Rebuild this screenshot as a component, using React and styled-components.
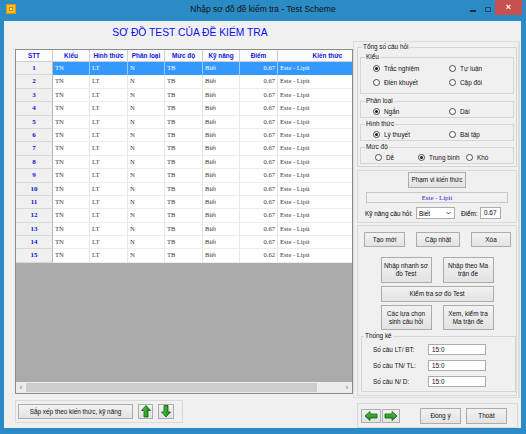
import styled, { createGlobalStyle } from "styled-components";

const GlobalStyle = createGlobalStyle`
  html, body { margin: 0; padding: 0; }
  body {
    width: 526px;
    height: 434px;
    overflow: hidden;
    font-family: "Liberation Sans", Arial, sans-serif;
  }
  * { box-sizing: border-box; }
`;

const COLS = "37px 37px 38px 37px 38px 37px 38px 100px";

const Window = styled.div`
  width: 526px;
  height: 434px;
  background: #2b8cc5;
  display: flex;
  flex-direction: column;
`;

const TitleBar = styled.div`
  height: 22px;
  display: grid;
  grid-template-columns: 1fr auto 1fr;
  align-items: start;
`;

const AppIcon = styled.div`
  margin: 4px 0 0 6px;
  width: 10px;
  height: 10px;
  background: #f5c022;
  border: 1px solid #d99a10;
  display: flex;
  align-items: center;
  justify-content: center;
`;

const Title = styled.div`
  font-size: 8.5px;
  line-height: 19px;
  color: #111;
`;

const Controls = styled.div`
  display: flex;
  justify-content: flex-end;
  align-items: flex-start;
  padding-right: 4px;
`;

const MinBtn = styled.div`
  width: 6px;
  height: 2px;
  background: #1a2a3a;
  margin: 10px 9px 0 0;
`;

const MaxBtn = styled.div`
  width: 6px;
  height: 5px;
  border: 1px solid #1a4a6a;
  margin: 7px 4px 0 0;
`;

const CloseBtn = styled.div`
  width: 27px;
  height: 15px;
  background: #c7504f;
  color: #fff;
  font-size: 9px;
  font-weight: bold;
  line-height: 15px;
  text-align: center;
`;

const Client = styled.div`
  flex: 1;
  margin: 0 5px 6px 4px;
  background: #f0f0f0;
  display: flex;
`;

const LeftCol = styled.div`
  width: 349px;
  padding-left: 11px;
  display: flex;
  flex-direction: column;
`;

const Heading = styled.div`
  height: 28px;
  line-height: 24px;
  padding-left: 12px;
  text-align: center;
  font-size: 10.3px;
  color: #0c0cf0;
`;

const GridBox = styled.div`
  width: 338px;
  height: 345px;
  border: 1px solid #8c8c8c;
  background: #ababab;
  display: flex;
  flex-direction: column;
  overflow: hidden;
`;

const Rows = styled.div`
  flex: 1;
  overflow: hidden;
`;

const Row = styled.div`
  display: grid;
  grid-template-columns: ${COLS};
  height: ${(p) => (p.$head ? "12px" : "13.4px")};
`;

const HeadCell = styled.div`
  background: #fbfbfb;
  border-right: 1px solid #cfcfcf;
  border-bottom: 1px solid #cfcfcf;
  font-size: 6.4px;
  font-weight: bold;
  color: #1515d8;
  text-align: center;
  line-height: 11px;
  white-space: nowrap;
  overflow: hidden;
`;

const RowHead = styled.div`
  background: #f0f0f0;
  border-right: 1px solid #b8b8b8;
  border-bottom: 1px solid #d8d8d8;
  font-family: "Liberation Serif", "Times New Roman", serif;
  font-size: 7px;
  font-weight: bold;
  color: #1010d0;
  text-align: center;
  line-height: 12.4px;
`;

const Cell = styled.div`
  background: ${(p) => (p.$sel ? "#3399ff" : "#fff")};
  color: ${(p) => (p.$sel ? "#fff" : "#3a3a3a")};
  border-right: 1px solid ${(p) => (p.$sel ? "#9cc9ff" : "#e6e6e6")};
  border-bottom: 1px solid ${(p) => (p.$sel ? "#3399ff" : "#ededed")};
  font-family: "Liberation Serif", "Times New Roman", serif;
  font-size: 6.6px;
  line-height: 12.4px;
  padding: 0 2px;
  text-align: ${(p) => (p.$right ? "right" : "left")};
  white-space: nowrap;
  overflow: hidden;
`;

const HScroll = styled.div`
  height: 11px;
  background: #ececec;
  display: flex;
  align-items: center;
  font-size: 7px;
  color: #555;
`;

const ScrollArrow = styled.div`
  width: 10px;
  text-align: center;
  line-height: 11px;
`;

const ScrollTrack = styled.div`
  flex: 1;
  height: 9px;
  padding-right: 25px;
`;

const ScrollThumb = styled.div`
  height: 100%;
  background: #cdcdcd;
`;

const Panel = styled.div`
  border: 1px solid #dadada;
  display: flex;
  flex-direction: ${(p) => (p.$column ? "column" : "row")};
  align-items: ${(p) => (p.$column ? "stretch" : "center")};
  height: ${(p) => p.$h}px;
`;

const LeftFooter = styled(Panel)`
  margin-top: 6px;
  width: 168px;
  padding-left: 2px;
  gap: 5px;
`;

const Button = styled.button`
  font-family: "Liberation Sans", Arial, sans-serif;
  font-size: 6.4px;
  line-height: 8px;
  color: #111;
  background: linear-gradient(#f2f2f2, #e3e3e3);
  border: 1px solid #acacac;
  border-radius: 0;
  padding: 0 2px;
  width: ${(p) => p.$w}px;
  height: ${(p) => p.$h || 15}px;
  display: flex;
  align-items: center;
  justify-content: center;
  text-align: center;
  flex-shrink: 0;
`;

const RightCol = styled.div`
  width: 167px;
  padding-top: 20px;
  display: flex;
  flex-direction: column;
`;

const RightFrame = styled.div`
  border: 1px solid #dcdcdc;
  border-right-width: 2px;
  padding: 1px 1px 1px 3px;
  display: flex;
  flex-direction: column;
`;

const Group = styled.fieldset`
  margin: ${(p) => p.$m || "0"};
  min-width: 0;
  border: 1px solid #d5d5d5;
  padding: ${(p) => p.$pad || "0 2px 2px"};
  font-size: 6.4px;
  color: #111;
`;

const Legend = styled.legend`
  padding: 0 1px;
  margin-left: 2px;
  line-height: 8px;
  font-size: 6.4px;
`;

const RadioGrid = styled.div`
  display: grid;
  grid-template-columns: ${(p) => p.$cols};
  grid-auto-rows: ${(p) => p.$rowH}px;
  padding-left: ${(p) => p.$pl || 10}px;
  padding-bottom: ${(p) => p.$pb || 0}px;
  align-items: center;
`;

const RadioItem = styled.label`
  display: flex;
  align-items: center;
  gap: 4px;
  font-size: 6.4px;
  white-space: nowrap;
`;

const Circle = styled.span`
  width: 7px;
  height: 7px;
  border-radius: 50%;
  border: 1px solid #4a4a4a;
  background: #fff;
  display: flex;
  align-items: center;
  justify-content: center;
  &::after {
    content: "";
    width: 3px;
    height: 3px;
    border-radius: 50%;
    background: ${(p) => (p.$on ? "#1a1a1a" : "transparent")};
  }
`;

const ScopeBox = styled.div`
  margin: 4px 8px 0;
  height: 11px;
  border: 1px solid #c8c8c8;
  background: #f0f0f0;
  text-align: center;
  font-family: "Liberation Serif", "Times New Roman", serif;
  font-size: 6.8px;
  line-height: 9px;
  color: #2020e0;
`;

const SkillRow = styled.div`
  margin-top: 4px;
  height: 12px;
  padding-left: 7px;
  display: grid;
  grid-template-columns: 51px 45px 19px 21px;
  column-gap: 0;
  align-items: center;
  font-size: 6.4px;
`;

const Combo = styled.div`
  height: 12px;
  background: #fff;
  border: 1px solid #acacac;
  display: flex;
  align-items: center;
  justify-content: space-between;
  padding: 0 3px 0 2px;
  font-size: 6.4px;
  margin-right: 6px;
`;

const TextBox = styled.div`
  width: ${(p) => p.$w}px;
  height: ${(p) => p.$h || 12}px;
  background: #fff;
  border: 1px solid #acacac;
  font-size: 6.4px;
  line-height: ${(p) => (p.$h || 12) - 2}px;
  padding-left: 3px;
`;

const BtnRow = styled.div`
  display: flex;
  justify-content: ${(p) => p.$justify || "center"};
  gap: ${(p) => p.$gap || 0}px;
  margin-top: ${(p) => p.$mt || 0}px;
  padding: ${(p) => p.$pad || "0"};
`;

const StatRow = styled.div`
  height: 16px;
  display: grid;
  grid-template-columns: 55px 58px;
  align-items: center;
  padding-left: 11px;
  font-size: 6.4px;
`;

const RightFooter = styled(Panel)`
  margin: 5px 2px 0 4px;
  padding-left: 3px;
`;

const ArrowBtn = styled(Button)`
  padding: 0;
  margin-left: ${(p) => p.$ml || 0}px;
`;

const Arrow = ({ dir }) => {
  const paths = {
    left: "M1 5 L6 0.5 L6 3 L13 3 L13 7 L6 7 L6 9.5 Z",
    right: "M13 5 L8 0.5 L8 3 L1 3 L1 7 L8 7 L8 9.5 Z",
    up: "M5 0.5 L9.5 5.5 L7 5.5 L7 12 L3 12 L3 5.5 L0.5 5.5 Z",
    down: "M5 12 L9.5 7 L7 7 L7 0.5 L3 0.5 L3 7 L0.5 7 Z",
  };
  const vertical = dir === "up" || dir === "down";
  return (
    <svg width={vertical ? 10 : 14} height={vertical ? 13 : 10} viewBox={vertical ? "0 0 10 13" : "0 0 14 10"}>
      <defs>
        <linearGradient id={`g-${dir}`} x1="0" y1="0" x2={vertical ? "1" : "0"} y2={vertical ? "0" : "1"}>
          <stop offset="0" stopColor="#5fcf4f" />
          <stop offset="1" stopColor="#0f7f12" />
        </linearGradient>
      </defs>
      <path d={paths[dir]} fill={`url(#g-${dir})`} stroke="#0b5a10" strokeWidth="0.8" strokeLinejoin="round" />
    </svg>
  );
};

const rows = Array.from({ length: 15 }, (_, i) => ({
  stt: i + 1,
  diem: i === 14 ? "0.62" : "0.67",
}));

const heads = ["Kiểu", "Hình thức", "Phân loại", "Mức độ", "Kỹ năng", "Điểm", "Kiến thức"];

const Radio = ({ on, children }) => (
  <RadioItem>
    <Circle $on={on} />
    {children}
  </RadioItem>
);

export default function App() {
  return (
    <>
      <GlobalStyle />
      <Window>
        <TitleBar>
          <div>
            <AppIcon>
              <svg width="6" height="6" viewBox="0 0 6 6">
                <rect x="1" y="1" width="4" height="4" fill="#e07a10" />
                <rect x="2" y="2" width="2" height="2" fill="#fff3b0" />
              </svg>
            </AppIcon>
          </div>
          <Title>Nhập sơ đồ đề kiểm tra - Test Scheme</Title>
          <Controls>
            <MinBtn />
            <MaxBtn />
            <CloseBtn>×</CloseBtn>
          </Controls>
        </TitleBar>
        <Client>
          <LeftCol>
            <Heading>SƠ ĐỒ TEST CỦA ĐỀ KIỂM TRA</Heading>
            <GridBox>
              <Rows>
                <Row $head>
                  <HeadCell>STT</HeadCell>
                  {heads.map((h) => (
                    <HeadCell key={h}>{h}</HeadCell>
                  ))}
                </Row>
                {rows.map((r) => {
                  const sel = r.stt === 1;
                  return (
                    <Row key={r.stt}>
                      <RowHead>{r.stt}</RowHead>
                      <Cell $sel={sel}>TN</Cell>
                      <Cell $sel={sel}>LT</Cell>
                      <Cell $sel={sel}>N</Cell>
                      <Cell $sel={sel}>TB</Cell>
                      <Cell $sel={sel}>Biết</Cell>
                      <Cell $sel={sel} $right>{r.diem}</Cell>
                      <Cell $sel={sel}>Este - Lipit</Cell>
                    </Row>
                  );
                })}
              </Rows>
              <HScroll>
                <ScrollArrow>‹</ScrollArrow>
                <ScrollTrack>
                  <ScrollThumb />
                </ScrollTrack>
                <ScrollArrow>›</ScrollArrow>
              </HScroll>
            </GridBox>
            <LeftFooter $h={23}>
              <Button $w={115}>Sắp xếp theo kiến thức, kỹ năng</Button>
              <ArrowBtn $w={15}><Arrow dir="up" /></ArrowBtn>
              <ArrowBtn $w={16}><Arrow dir="down" /></ArrowBtn>
            </LeftFooter>
          </LeftCol>

          <RightCol>
            <RightFrame>
              <Group $pad="0 2px 2px">
                <Legend>Tổng số câu hỏi</Legend>
                <Group $m="2px 0 0">
                  <Legend>Kiểu</Legend>
                  <RadioGrid $cols="76px auto" $rowH={14} $pb={2}>
                    <Radio on>Trắc nghiệm</Radio>
                    <Radio>Tự luận</Radio>
                    <Radio>Điền khuyết</Radio>
                    <Radio>Cặp đôi</Radio>
                  </RadioGrid>
                </Group>
                <Group $m="3px 0 0" $pad="0 2px">
                  <Legend>Phân loại</Legend>
                  <RadioGrid $cols="76px auto" $rowH={12}>
                    <Radio on>Ngắn</Radio>
                    <Radio>Dài</Radio>
                  </RadioGrid>
                </Group>
                <Group $m="2px 0 0" $pad="0 2px">
                  <Legend>Hình thức</Legend>
                  <RadioGrid $cols="76px auto" $rowH={12}>
                    <Radio on>Lý thuyết</Radio>
                    <Radio>Bài tập</Radio>
                  </RadioGrid>
                </Group>
                <Group $m="2px 0 0" $pad="0 2px">
                  <Legend>Mức độ</Legend>
                  <RadioGrid $cols="43px 48px auto" $rowH={12} $pl={12}>
                    <Radio>Dễ</Radio>
                    <Radio on>Trung bình</Radio>
                    <Radio>Khó</Radio>
                  </RadioGrid>
                </Group>
              </Group>

              <Panel $column $h={53} style={{ marginTop: 3, paddingTop: 1 }}>
                <BtnRow>
                  <Button $w={58} $h={16}>Phạm vi kiến thức</Button>
                </BtnRow>
                <ScopeBox>Este - Lipit</ScopeBox>
                <SkillRow>
                  <span>Kỹ năng câu hỏi:</span>
                  <Combo>
                    <span>Biết</span>
                    <svg width="5" height="4" viewBox="0 0 5 4">
                      <path d="M0.5 1 L2.5 3 L4.5 1" fill="none" stroke="#444" strokeWidth="0.9" />
                    </svg>
                  </Combo>
                  <span>Điểm:</span>
                  <TextBox $w={21}>0.67</TextBox>
                </SkillRow>
              </Panel>

              <Panel $column $h={171} style={{ marginTop: 2, paddingTop: 6 }}>
                <BtnRow $justify="space-between" $pad="0 5px 0 6px">
                  <Button $w={41}>Tạo mới</Button>
                  <Button $w={44}>Cập nhật</Button>
                  <Button $w={40}>Xóa</Button>
                </BtnRow>
                <BtnRow $gap={11} $mt={10}>
                  <Button $w={51} $h={26}>Nhập nhanh sơ đồ Test</Button>
                  <Button $w={51} $h={26}>Nhập theo Ma trận đề</Button>
                </BtnRow>
                <BtnRow $mt={3}>
                  <Button $w={113} $h={16}>Kiểm tra sơ đồ Test</Button>
                </BtnRow>
                <BtnRow $gap={11} $mt={3}>
                  <Button $w={51} $h={25}>Các lựa chọn sinh câu hỏi</Button>
                  <Button $w={51} $h={25}>Xem, kiểm tra Ma trận đề</Button>
                </BtnRow>
                <Group $m="2px 0 0 3px" $pad="1px 0 2px">
                  <Legend>Thống kê</Legend>
                  <StatRow>
                    <span>Số câu LT/ BT:</span>
                    <TextBox $w={58} $h={11}>15:0</TextBox>
                  </StatRow>
                  <StatRow>
                    <span>Số câu TN/ TL:</span>
                    <TextBox $w={58} $h={11}>15:0</TextBox>
                  </StatRow>
                  <StatRow>
                    <span>Số câu N/ D:</span>
                    <TextBox $w={58} $h={11}>15:0</TextBox>
                  </StatRow>
                </Group>
              </Panel>
            </RightFrame>

            <RightFooter $h={25}>
              <ArrowBtn $w={20} $h={14}><Arrow dir="left" /></ArrowBtn>
              <ArrowBtn $w={18} $h={14} $ml={1}><Arrow dir="right" /></ArrowBtn>
              <Button $w={41} $h={16} style={{ marginLeft: 20 }}>Đồng ý</Button>
              <Button $w={41} $h={16} style={{ marginLeft: 5 }}>Thoát</Button>
            </RightFooter>
          </RightCol>
        </Client>
      </Window>
    </>
  );
}
